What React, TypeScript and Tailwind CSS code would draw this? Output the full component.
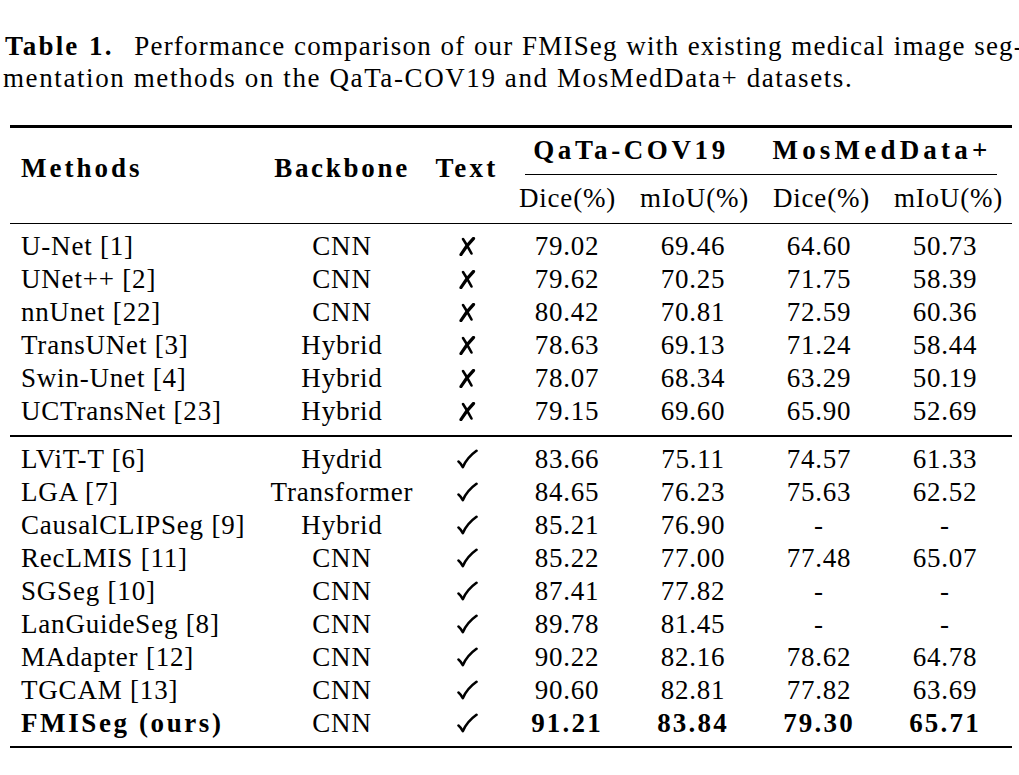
const groupA: [string, string, boolean, string, string, string, string][] = [
    ["U-Net [1]", "CNN", false, "79.02", "69.46", "64.60", "50.73"],
    ["UNet++ [2]", "CNN", false, "79.62", "70.25", "71.75", "58.39"],
    ["nnUnet [22]", "CNN", false, "80.42", "70.81", "72.59", "60.36"],
    ["TransUNet [3]", "Hybrid", false, "78.63", "69.13", "71.24", "58.44"],
    ["Swin-Unet [4]", "Hybrid", false, "78.07", "68.34", "63.29", "50.19"],
    ["UCTransNet [23]", "Hybrid", false, "79.15", "69.60", "65.90", "52.69"],
]

const groupB: [string, string, boolean, string, string, string, string][] = [
    ["LViT-T [6]", "Hydrid", true, "83.66", "75.11", "74.57", "61.33"],
    ["LGA [7]", "Transformer", true, "84.65", "76.23", "75.63", "62.52"],
    ["CausalCLIPSeg [9]", "Hybrid", true, "85.21", "76.90", "-", "-"],
    ["RecLMIS [11]", "CNN", true, "85.22", "77.00", "77.48", "65.07"],
    ["SGSeg [10]", "CNN", true, "87.41", "77.82", "-", "-"],
    ["LanGuideSeg [8]", "CNN", true, "89.78", "81.45", "-", "-"],
    ["MAdapter [12]", "CNN", true, "90.22", "82.16", "78.62", "64.78"],
    ["TGCAM [13]", "CNN", true, "90.60", "82.81", "77.82", "63.69"],
]

const cols = "grid grid-cols-[244px_176px_74px_126px_126px_126px_126px]"

function Mark({ok}: {ok: boolean}) {
    if (ok) {
        return (
            <svg width="22" height="20" viewBox="0 0 22 20" className="inline-block">
                <path d="M2.5 12.5 Q4.5 14 6.8 18.2 Q11 8.5 20.5 1.8" fill="none" stroke="#000" strokeWidth="2.6" strokeLinecap="round" strokeLinejoin="round" />
            </svg>
        )
    }
    return (
        <svg width="18" height="19" viewBox="0 0 18 19" className="inline-block">
            <path d="M3 17.5 Q8 9 15.5 1.5" fill="none" stroke="#000" strokeWidth="3.2" strokeLinecap="round" />
            <path d="M5 2 Q9 8 13.5 16.5" fill="none" stroke="#000" strokeWidth="2.6" strokeLinecap="round" />
        </svg>
    )
}

function Row({r, bold}: {r: [string, string, boolean, string, string, string, string]; bold?: boolean}) {
    const num = bold ? "text-center font-bold tracking-[2.2px]" : "text-center"
    return (
        <div className={`${cols} h-[33px] items-center leading-[33px]`}>
            <div className={bold ? "pl-[11px] font-bold tracking-[2.6px]" : "pl-[11px]"}>{r[0]}</div>
            <div className="text-center">{r[1]}</div>
            <div className="flex items-center justify-center">
                <Mark ok={r[2]} />
            </div>
            <div className={num}>{r[3]}</div>
            <div className={num}>{r[4]}</div>
            <div className={num}>{r[5]}</div>
            <div className={num}>{r[6]}</div>
        </div>
    )
}

export default function App() {
    return (
        <div className="w-full min-h-[775px] overflow-hidden bg-white text-black font-['Liberation_Serif'] tracking-[0.8px]">
            {/* CAPTION */}
            <div className="pt-[30px] text-[27px] leading-[32px]">
                <div className="ml-[5px] w-[1019px] whitespace-nowrap text-justify tracking-[1.2px] [text-align-last:justify]">
                    <b className="mr-[12px] tracking-[2.2px]">Table 1.</b>
                    {" "}Performance comparison of our FMISeg with existing medical image seg-
                </div>
                <div className="ml-[3px] whitespace-nowrap tracking-[1.6px]">
                    mentation methods on the QaTa-COV19 and MosMedData+ datasets.
                </div>
            </div>

            {/* TABLE */}
            <div className="mt-[31px] ml-[10px] w-[1002px] text-[27px]">
                <div className="h-[2.5px] bg-black" />

                {/* HEADER */}
                <div className="flex">
                    <div className="grid w-[494px] grid-cols-[244px_176px_74px] pt-[24px] font-bold leading-[33px]">
                        <div className="pl-[11px] tracking-[3px]">Methods</div>
                        <div className="text-center tracking-[2.7px]">Backbone</div>
                        <div className="text-center tracking-[3.3px]">Text</div>
                    </div>
                    <div className="w-[508px]">
                        <div className="grid h-[46px] grid-cols-2 items-center font-bold">
                            <div className="text-center tracking-[3.6px]">QaTa-COV19</div>
                            <div className="pr-[6px] text-center tracking-[4.2px]">MosMedData+</div>
                        </div>
                        <div className="ml-[21px] mr-[15px] h-[1px] bg-black" />
                        <div className="grid h-[48px] grid-cols-4 items-center">
                            <div className="text-center">Dice(%)</div>
                            <div className="text-center">mIoU(%)</div>
                            <div className="text-center">Dice(%)</div>
                            <div className="text-center">mIoU(%)</div>
                        </div>
                    </div>
                </div>

                <div className="h-[1.5px] bg-black" />

                {/* WITHOUT TEXT */}
                <div className="pt-[6px] pb-[7px]">
                    {groupA.map((r) => (
                        <Row key={r[0]} r={r} />
                    ))}
                </div>

                <div className="h-[1.5px] bg-black" />

                {/* WITH TEXT */}
                <div className="pt-[6px] pb-[6px]">
                    {groupB.map((r) => (
                        <Row key={r[0]} r={r} />
                    ))}
                    <Row r={["FMISeg (ours)", "CNN", true, "91.21", "83.84", "79.30", "65.71"]} bold />
                </div>

                <div className="h-[2.5px] bg-black" />
            </div>
        </div>
    )
}
